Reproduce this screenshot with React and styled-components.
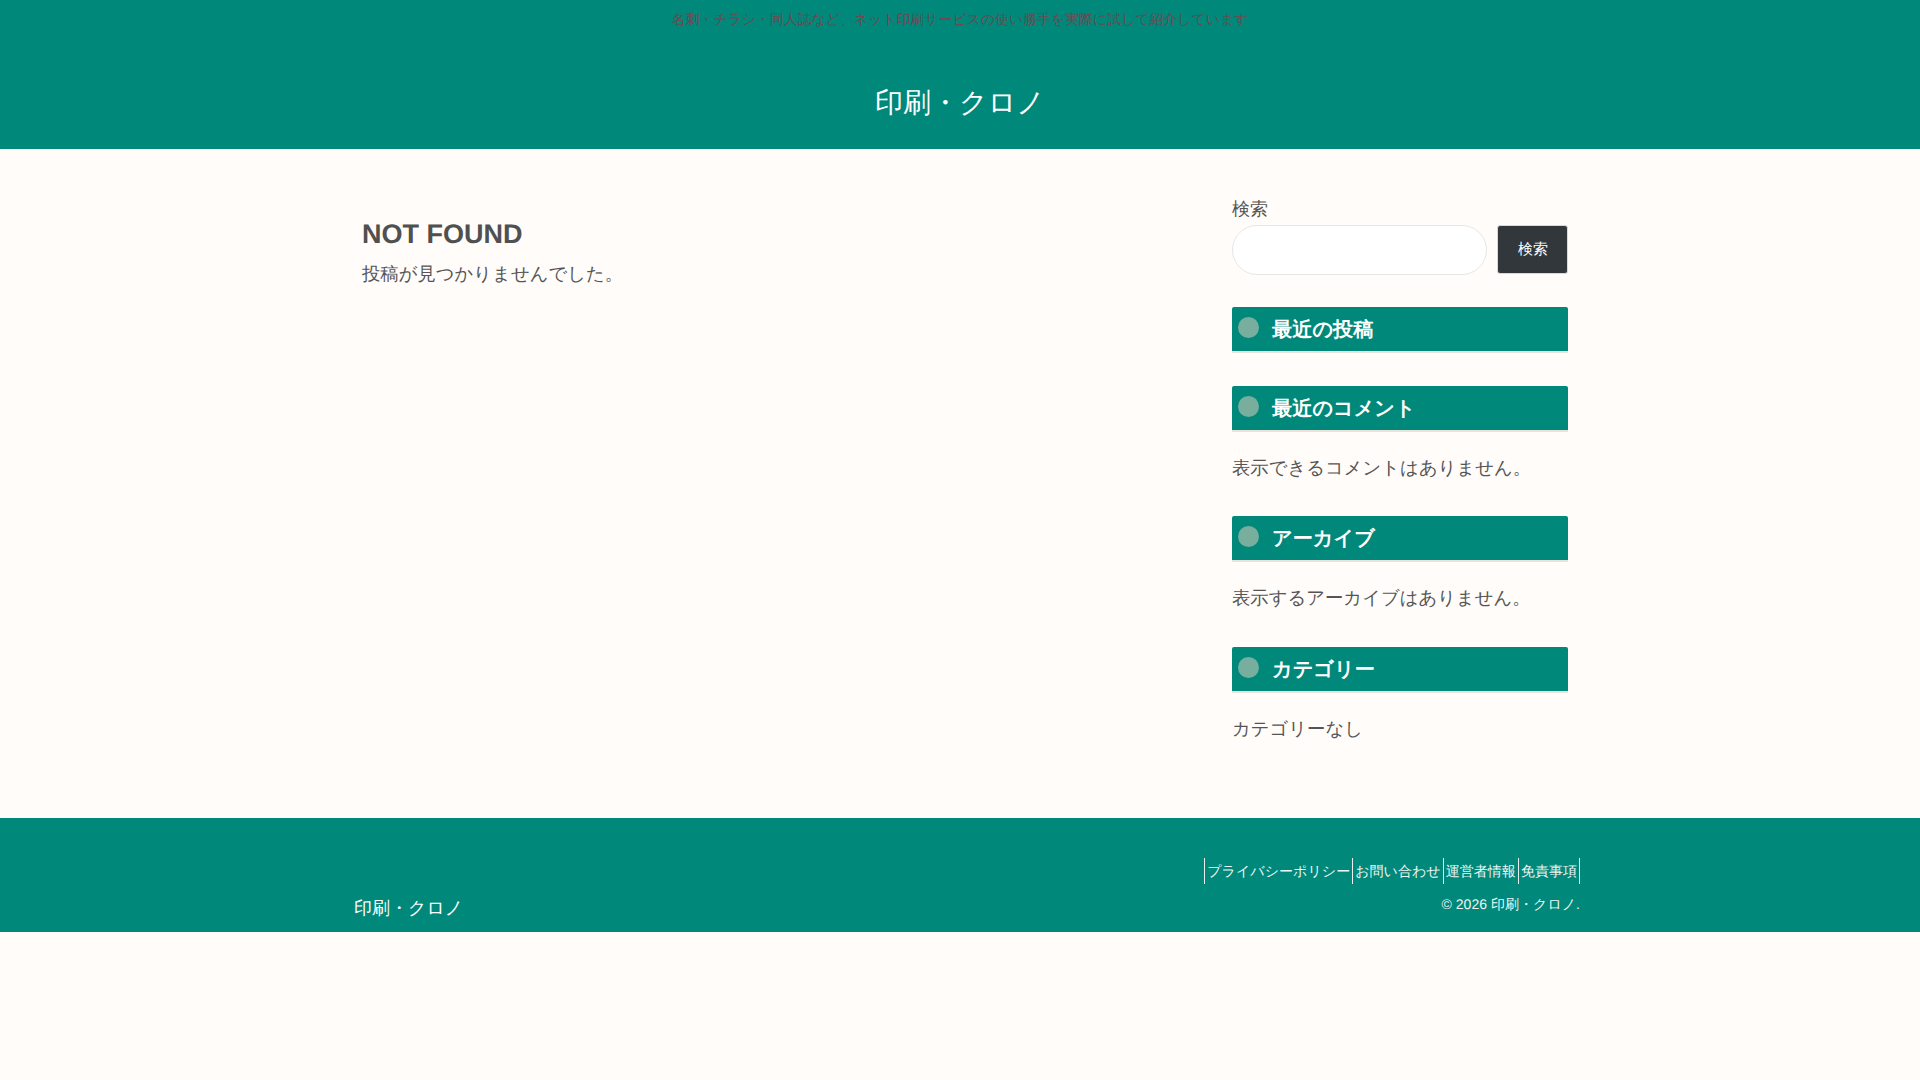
import React from "react";
import styled, { createGlobalStyle } from "styled-components";

const Global = createGlobalStyle`
  html, body { margin: 0; padding: 0; background: #fffcf9; }
  body {
    font-family: "Liberation Sans", sans-serif;
    font-size: 18px;
    line-height: 1.8;
    color: #555;
    text-rendering: geometricPrecision;
  }
  * { box-sizing: border-box; }
`;

const Header = styled.header`
  background: #00887a;
  height: 149px;
  text-align: center;
`;
const Tagline = styled.p`
  margin: 0;
  padding-top: 7px;
  font-size: 13.9px;
  line-height: 25px;
  color: #6b4a50;
`;
const SiteTitle = styled.div`
  margin-top: 46px;
  font-size: 28px;
  line-height: 50px;
  color: #fff;
`;
const Container = styled.div`
  width: 1256px;
  margin: 0 auto;
  display: flex;
  gap: 20px;
  height: 669px;
`;
const Main = styled.main`
  width: 860px;
  padding: 67px 30px 0;
`;
const Title = styled.h1`
  margin: 0;
  font-size: 27px;
  line-height: 36px;
  font-weight: 700;
  color: #505050;
`;
const Para = styled.p`
  margin: 6px 0 0;
  font-size: 18.35px;
  line-height: 32px;
`;
const Sidebar = styled.aside`
  width: 376px;
  padding: 44px 20px 0;
`;
const Label = styled.label`
  display: block;
  line-height: 32px;
`;
const SearchRow = styled.div`
  display: flex;
  align-items: flex-start;
  gap: 10px;
  margin-bottom: 32px;
`;
const SearchInput = styled.input`
  width: 255px;
  height: 50px;
  border: 1px solid #e8e6e3;
  border-radius: 25px;
  background: #fff;
`;
const SearchButton = styled.button`
  width: 71px;
  height: 49px;
  border: 1px solid #d9d9d9;
  border-radius: 3px;
  background: #32373c;
  color: #fff;
  font-family: inherit;
  font-size: 14.8px;
`;
const Widget = styled.section`
  margin-bottom: ${(p) => p.$gap}px;
`;
const WidgetTitle = styled.h2`
  position: relative;
  margin: 0;
  height: 46px;
  padding-left: 40px;
  background: #00887a;
  border-bottom: 2px solid #e9e3dc;
  border-radius: 2px 2px 0 0;
  color: #fff;
  font-size: 20.2px;
  line-height: 46px;
  font-weight: 700;
  &::before {
    content: "";
    position: absolute;
    left: 6px;
    top: 10px;
    width: 21px;
    height: 21px;
    border-radius: 50%;
    background: #78ae9e;
  }
`;
const WidgetText = styled.p`
  margin: 20px 0 0;
  font-size: 18.35px;
  line-height: 32px;
`;
const Footer = styled.footer`
  background: #00887a;
  height: 114px;
  color: #fff;
`;
const FooterInner = styled.div`
  width: 1226px;
  margin-left: 354px;
  height: 100%;
  display: flex;
  justify-content: space-between;
`;
const FooterLogo = styled.div`
  align-self: flex-end;
  margin-bottom: 8px;
  font-size: 18px;
  line-height: 32px;
`;
const FooterRight = styled.div`
  padding-top: 39.6px;
  text-align: right;
  font-size: 14.04px;
`;
const FooterNav = styled.nav`
  display: flex;
  justify-content: flex-end;
  border-right: 1px solid #e8f0ee;
  line-height: 26px;
`;
const FooterLink = styled.a`
  padding: 0 2px;
  border-left: 1px solid #e8f0ee;
  color: #eef6f4;
`;
const Copy = styled.div`
  margin-top: 8px;
  line-height: 25px;
  color: #eef6f4;
`;

const widgets = [
  { title: "最近の投稿", gap: 33 },
  { title: "最近のコメント", text: "表示できるコメントはありません。", gap: 32 },
  { title: "アーカイブ", text: "表示するアーカイブはありません。", gap: 33 },
  { title: "カテゴリー", text: "カテゴリーなし", gap: 0 },
];
const links = ["プライバシーポリシー", "お問い合わせ", "運営者情報", "免責事項"];

export default function App() {
  return (
    <>
      <Global />
      <Header>
        <Tagline>名刺・チラシ・同人誌など、ネット印刷サービスの使い勝手を実際に試して紹介しています</Tagline>
        <SiteTitle>印刷・クロノ</SiteTitle>
      </Header>
      <Container>
        <Main>
          <Title>NOT FOUND</Title>
          <Para>投稿が見つかりませんでした。</Para>
        </Main>
        <Sidebar>
          <Label>検索</Label>
          <SearchRow>
            <SearchInput />
            <SearchButton>検索</SearchButton>
          </SearchRow>
          {widgets.map((w) => (
            <Widget key={w.title} $gap={w.gap}>
              <WidgetTitle>{w.title}</WidgetTitle>
              {w.text && <WidgetText>{w.text}</WidgetText>}
            </Widget>
          ))}
        </Sidebar>
      </Container>
      <Footer>
        <FooterInner>
          <FooterLogo>印刷・クロノ</FooterLogo>
          <FooterRight>
            <FooterNav>
              {links.map((l) => (
                <FooterLink key={l}>{l}</FooterLink>
              ))}
            </FooterNav>
            <Copy>© 2026 印刷・クロノ.</Copy>
          </FooterRight>
        </FooterInner>
      </Footer>
    </>
  );
}
